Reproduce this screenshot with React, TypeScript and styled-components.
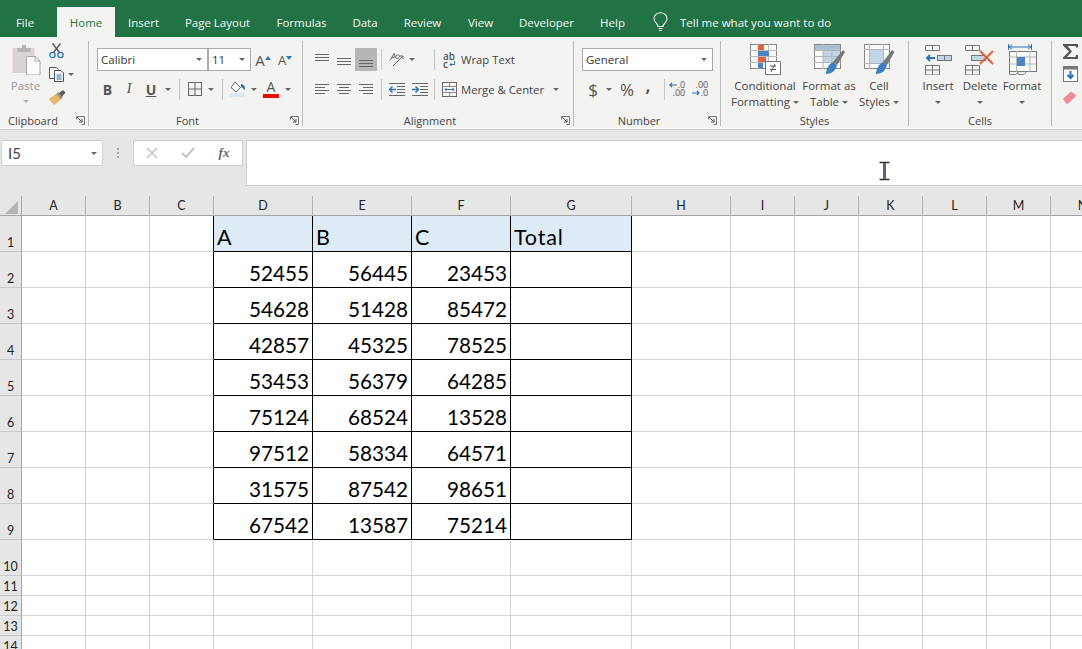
import React from "react";
import styled, { createGlobalStyle } from "styled-components";

const UI_FONT = `"Open Sans", "Noto Sans", sans-serif`;
const SHEET_FONT = `Lato, "Open Sans", sans-serif`;

const GlobalStyle = createGlobalStyle`
  html, body { margin: 0; padding: 0; background: #fff; overflow: hidden; }
  #root { width: 1082px; height: 649px; }
`;

const Page = styled.div`
  position: relative;
  width: 1082px;
  height: 649px;
  overflow: hidden;
  font-family: ${UI_FONT};
  background: #fff;
`;

/* title tabs */
const TabBar = styled.div`
  display: flex;
  align-items: flex-end;
  height: 37px;
  background: #217346;
`;

const Tab = styled.div<{ $w: number; $active?: boolean; $pr?: number }>`
  box-sizing: border-box;
  width: ${(p) => p.$w}px;
  height: ${(p) => (p.$active ? 30 : 37)}px;
  padding-right: ${(p) => p.$pr || 0}px;
  padding-top: ${(p) => (p.$active ? 0 : 7)}px;
  display: flex;
  align-items: center;
  justify-content: center;
  font-size: 11.5px;
  color: ${(p) => (p.$active ? "#217346" : "#f4f8f5")};
  background: ${(p) => (p.$active ? "#f3f3f2" : "transparent")};
`;

const TellMe = styled.div`
  display: flex;
  align-items: center;
  gap: 12px;
  height: 30px;
  margin-left: 15px;
  font-size: 11.5px;
  color: #f4f8f5;
`;

/* ribbon */
const Ribbon = styled.div`
  box-sizing: border-box;
  display: flex;
  height: 93px;
  padding-top: 4px;
  background: #f3f3f2;
  border-bottom: 1px solid #cfcfcf;
`;

const Group = styled.div<{ $w: number; $last?: boolean }>`
  box-sizing: border-box;
  flex: none;
  position: relative;
  width: ${(p) => p.$w}px;
  height: 85px;
  display: flex;
  flex-direction: column;
  border-right: ${(p) => (p.$last ? "none" : "1px solid #b9b9b9")};
`;

const GroupBody = styled.div<{ $pl?: number; $row?: boolean; $pt?: number }>`
  box-sizing: border-box;
  height: 74px;
  display: flex;
  flex-direction: ${(p) => (p.$row ? "row" : "column")};
  gap: ${(p) => (p.$row ? 0 : 7)}px;
  padding-left: ${(p) => p.$pl ?? 8}px;
  padding-top: ${(p) => p.$pt ?? 7}px;
`;

const GroupLabel = styled.div<{ $pr?: number }>`
  height: 11px;
  padding-right: ${(p) => p.$pr || 0}px;
  line-height: 11px;
  text-align: center;
  font-size: 11px;
  color: #444;
`;

const Launcher = styled.svg`
  position: absolute;
  right: 3px;
  bottom: 1px;
`;

const ToolRow = styled.div<{ $h?: number }>`
  display: flex;
  align-items: center;
  height: ${(p) => p.$h || 22}px;
`;

const Slot = styled.div<{ $w: number; $on?: boolean }>`
  flex: none;
  width: ${(p) => p.$w}px;
  height: 100%;
  display: flex;
  align-items: center;
  justify-content: center;
  background: ${(p) => (p.$on ? "#b6b6b6" : "transparent")};
`;

const Caret = styled.span`
  flex: none;
  display: inline-block;
  width: 0;
  height: 0;
  border-left: 3px solid transparent;
  border-right: 3px solid transparent;
  border-top: 3px solid #666;
`;

const Sep = styled.div<{ $ml?: number; $mr?: number }>`
  flex: none;
  width: 1px;
  height: 21px;
  margin-left: ${(p) => p.$ml || 0}px;
  margin-right: ${(p) => p.$mr || 0}px;
  background: #c6c6c6;
`;

const Combo = styled.div<{ $w: number }>`
  box-sizing: border-box;
  flex: none;
  width: ${(p) => p.$w}px;
  height: 23px;
  padding: 0 5px 0 3px;
  display: flex;
  align-items: center;
  justify-content: space-between;
  background: #fff;
  border: 1px solid #ababab;
  font-family: ${UI_FONT};
  font-size: 11.5px;
  color: #333;
`;

const FormatLetter = styled.span<{ $serif?: boolean; $i?: boolean; $u?: boolean }>`
  font-family: ${(p) => (p.$serif ? `"Liberation Serif", serif` : UI_FONT)};
  font-size: 14px;
  font-weight: ${(p) => (p.$i ? 400 : 700)};
  font-style: ${(p) => (p.$i ? "italic" : "normal")};
  text-decoration: ${(p) => (p.$u ? "underline" : "none")};
  color: #555;
`;

const NumSymbol = styled.span<{ $size?: number; $raise?: number; $bold?: boolean }>`
  padding-bottom: ${(p) => p.$raise || 0}px;
  font-size: ${(p) => p.$size || 17}px;
  font-weight: ${(p) => (p.$bold ? 700 : 400)};
  color: #555;
`;

const TextTool = styled.div<{ $gap?: number }>`
  display: flex;
  align-items: center;
  gap: ${(p) => p.$gap ?? 4}px;
  font-size: 11.3px;
  color: #444;
  white-space: nowrap;
`;

/* small glyph buttons that hold real letters */
const GrowGlyph = styled.span<{ $size: number }>`
  display: flex;
  align-items: flex-end;
  height: 20px;
  font-size: ${(p) => p.$size}px;
  line-height: 20px;
  color: #555;
`;

const TinyArrow = styled.svg`
  margin-bottom: 10px;
`;

const ColorGlyph = styled.span`
  display: flex;
  flex-direction: column;
  align-items: center;
  width: 16px;
  font-size: 14px;
  line-height: 14px;
  color: #555;
`;

const ColorBar = styled.span`
  width: 16px;
  height: 4px;
  background: #f00;
`;

const StackGlyph = styled.span`
  display: flex;
  flex-direction: column;
  align-items: flex-end;
  font-size: 9px;
  line-height: 8px;
  color: #555;
`;

const StackLine = styled.span`
  display: flex;
  align-items: center;
  gap: 1px;
  height: 8px;
`;

const WrapGlyph = styled.span`
  display: flex;
  flex-direction: column;
  width: 13px;
  font-size: 10px;
  font-weight: 600;
  line-height: 8px;
  color: #555;
`;

const PasteColumn = styled.div`
  flex: none;
  width: 35px;
  display: flex;
  flex-direction: column;
  align-items: center;
  font-size: 11.5px;
  color: #9c9c9c;
`;

const PasteText = styled.div`
  margin-top: 3px;
  line-height: 16px;
`;

const PasteCaret = styled(Caret)`
  margin-top: 6px;
  border-top-color: #b5b5b5;
`;

const ClipTools = styled.div`
  display: flex;
  flex-direction: column;
  gap: 7px;
  margin: -1px 0 0 6px;
`;

const ClipTool = styled.div`
  display: flex;
  align-items: center;
  gap: 3px;
  height: 16px;
`;

const BigButton = styled.div<{ $w: number }>`
  flex: none;
  width: ${(p) => p.$w}px;
  display: flex;
  flex-direction: column;
  align-items: center;
  font-size: 11.5px;
  line-height: 16px;
  color: #444;
  white-space: nowrap;
`;

const BigIcon = styled.div`
  height: 31px;
  margin-bottom: 3px;
`;

const LabelLine = styled.div`
  display: flex;
  align-items: center;
  gap: 3px;
  height: 16px;
`;

const EditingTools = styled.div`
  display: flex;
  flex-direction: column;
  gap: 7px;
  margin-left: 11px;
`;

/* formula bar */
const FormulaBar = styled.div`
  box-sizing: border-box;
  display: flex;
  align-items: flex-start;
  height: 66px;
  padding: 10px 0 0 1px;
  background: #e6e6e6;
`;

const NameBox = styled.div`
  box-sizing: border-box;
  width: 102px;
  height: 26px;
  padding: 0 5px 0 6px;
  display: flex;
  align-items: center;
  justify-content: space-between;
  background: #fff;
  border: 1px solid #cfcfcf;
  font-family: ${SHEET_FONT};
  font-size: 15px;
  color: #444;
`;

const Dots = styled.div`
  width: 30px;
  height: 26px;
  display: flex;
  flex-direction: column;
  align-items: center;
  justify-content: center;
  gap: 2px;
  span {
    width: 2px;
    height: 2px;
    background: #a8a8a8;
  }
`;

const FxBox = styled.div`
  box-sizing: border-box;
  width: 110px;
  height: 26px;
  display: flex;
  align-items: center;
  background: #fff;
  border: 1px solid #cfcfcf;
`;

const FxSlot = styled.div`
  flex: 1;
  display: flex;
  align-items: center;
  justify-content: center;
`;

const FxText = styled.span`
  font-family: "Liberation Serif", serif;
  font-style: italic;
  font-weight: 700;
  font-size: 13px;
  color: #666;
`;

const FormulaInput = styled.div`
  box-sizing: border-box;
  flex: 1;
  height: 46px;
  margin-left: 3px;
  background: #fff;
  border: 1px solid #cfcfcf;
  border-right: none;
`;

const IBeam = styled.svg`
  position: absolute;
  left: 878px;
  top: 161px;
`;

/* sheet */
const Sheet = styled.div`
  display: grid;
  grid-template-columns: 22px 64px 64px 64px 99px 99px 99px 121px 99px 64px 64px 64px 64px 64px 64px;
  grid-template-rows: 20px repeat(10, 36px) repeat(4, 20px);
`;

const Corner = styled.div`
  box-sizing: border-box;
  display: flex;
  align-items: flex-end;
  justify-content: flex-end;
  padding: 0 3px 1px 0;
  background: #e6e6e6;
  border-bottom: 1px solid #a5a5a5;
  border-right: 1px solid #a5a5a5;
`;

const ColHead = styled.div`
  box-sizing: border-box;
  display: flex;
  align-items: center;
  justify-content: center;
  background: #e6e6e6;
  border-bottom: 1px solid #a5a5a5;
  border-right: 1px solid #b4b4b4;
  font-family: ${SHEET_FONT};
  font-size: 12.5px;
  color: #222;
`;

const RowHead = styled.div`
  box-sizing: border-box;
  display: flex;
  align-items: flex-end;
  justify-content: center;
  background: #e6e6e6;
  border-bottom: 1px solid #c9c9c9;
  border-right: 1px solid #a5a5a5;
  font-family: ${SHEET_FONT};
  font-size: 12.5px;
  line-height: 16px;
  color: #222;
`;

const Cell = styled.div<{ $boxed?: boolean; $edge?: boolean; $head?: boolean; $num?: boolean }>`
  box-sizing: border-box;
  display: flex;
  align-items: flex-end;
  justify-content: ${(p) => (p.$num ? "flex-end" : "flex-start")};
  padding: 0 3px;
  background: ${(p) => (p.$head ? "#ddebf7" : "#fff")};
  border-right: 1px solid ${(p) => (p.$boxed || p.$edge ? "#000" : "#d4d4d4")};
  border-bottom: 1px solid ${(p) => (p.$boxed ? "#000" : "#d4d4d4")};
  font-family: ${SHEET_FONT};
  font-size: ${(p) => (p.$head ? 21.5 : 20.7)}px;
  letter-spacing: ${(p) => (p.$head ? 0.8 : 0)}px;
  line-height: 27px;
  color: #000;
`;

const caretSlot = (w: number) => (
  <Slot $w={w}>
    <Caret />
  </Slot>
);

const LauncherIcon = () => (
  <Launcher width="9" height="9" viewBox="0 0 9 9" fill="none" stroke="#777">
    <path d="M0.5 3.5V0.5H8.5V8.5H5.5" />
    <path d="M1 1L6 6M6 3V6H3" stroke="#555" />
  </Launcher>
);

const Lines = ({ rows, w = 14, h = 14, color = "#666" }: { rows: number[][]; w?: number; h?: number; color?: string }) => (
  <svg width={w} height={h} viewBox={`0 0 ${w} ${h}`} stroke={color} fill="none">
    {rows.map((r, i) => (
      <path key={i} d={`M${r[0]} ${r[2] + 0.5}H${r[1]}`} />
    ))}
  </svg>
);

const alignRows = {
  top: [[0, 14, 1], [0, 14, 4], [0, 14, 7]],
  mid: [[0, 14, 5], [0, 14, 8], [0, 14, 11]],
  bot: [[0, 14, 7], [0, 14, 10], [0, 14, 13]],
  left: [[0, 14, 2], [0, 10, 5], [0, 14, 8], [0, 10, 11]],
  center: [[0, 14, 2], [2, 12, 5], [0, 14, 8], [2, 12, 11]],
  right: [[0, 14, 2], [4, 14, 5], [0, 14, 8], [4, 14, 11]],
};

const PasteIcon = () => (
  <svg width="31" height="31" viewBox="0 0 31 31">
    <rect x="2.5" y="4" width="22" height="25" fill="#dcd3d5" />
    <path d="M7.5 8V4H12V1H16V4H20.5V8Z" fill="#b4b4b4" />
    <path d="M16.5 12.5H25L30 17V31H16.5Z" fill="#fbfbfb" stroke="#a9a9a9" />
    <path d="M25 12.5V17H30" fill="none" stroke="#a9a9a9" />
  </svg>
);

const ScissorsIcon = () => (
  <svg width="15" height="16" viewBox="0 0 15 16" fill="none">
    <path d="M4.5 9.5L11.5 0.5M10.5 9.5L3.5 0.5" stroke="#555" strokeWidth="1.3" />
    <circle cx="3.5" cy="12" r="2.6" stroke="#2e75b6" strokeWidth="1.3" />
    <circle cx="11.5" cy="12" r="2.6" stroke="#2e75b6" strokeWidth="1.3" />
  </svg>
);

const CopyIcon = () => (
  <svg width="16" height="15" viewBox="0 0 16 15" fill="#f8f8f8" stroke="#555">
    <path d="M0.5 0.5H7.5L9.5 2.5V11.5H0.5Z" />
    <path d="M5.5 3.5H12L14.5 6V14.5H5.5Z" />
    <path d="M7.5 8H12.5M7.5 10H12.5M7.5 12H12.5" stroke="#2e75b6" />
  </svg>
);

const BrushIcon = () => (
  <svg width="17" height="15" viewBox="0 0 17 15">
    <path d="M0 9L7 4L12 9.5L5 15Z" fill="#e9b765" />
    <path d="M7 4L9.5 2L14 7L12 9.5Z" fill="#9a8f80" />
    <path d="M10 3L14 0L16.5 2.5L13 6.5Z" fill="#5a5a5a" />
  </svg>
);

const FontSizeGlyph = ({ up }: { up?: boolean }) => (
  <GrowGlyph $size={up ? 15 : 13}>
    A
    <TinyArrow width="6" height="4" viewBox="0 0 6 4">
      <path d={up ? "M0 4L3 0L6 4Z" : "M0 0H6L3 4Z"} fill="#2e75b6" />
    </TinyArrow>
  </GrowGlyph>
);

const BordersIcon = () => (
  <svg width="14" height="14" viewBox="0 0 14 14" fill="none" stroke="#666">
    <rect x="0.5" y="0.5" width="13" height="13" />
    <path d="M7 0V14M0 7H14" />
  </svg>
);

const FillIcon = () => (
  <svg width="16" height="16" viewBox="0 0 16 16">
    <rect x="0" y="12" width="14" height="4" fill="#d9e8f5" />
    <path d="M5 1L10.5 6.5L6 11L1 6.5Z" fill="#fff" stroke="#666" />
    <path d="M11 3C14 3.5 15.5 6 15 9L13 7.5L11 6Z" fill="#2e75b6" />
  </svg>
);

const OrientationIcon = () => (
  <svg width="16" height="15" viewBox="0 0 16 15" fill="none" stroke="#666">
    <path d="M1 8.5L5 1.5L7.5 7M2.5 6L6.5 4.5" />
    <path d="M7 3.5C9 2.5 10.5 3 10.5 4.5C10.5 6 8.5 7 7.5 6" strokeWidth="0.9" />
    <path d="M4 14L14 4M14 4H10.5M14 4V7.5" />
  </svg>
);

const WrapIcon = () => (
  <WrapGlyph>
    <StackLine>ab</StackLine>
    <StackLine>
      c
      <svg width="6" height="6" viewBox="0 0 6 6" fill="none" stroke="#2e75b6">
        <path d="M5.5 0V3.5H1M2.5 2L1 3.5L2.5 5" />
      </svg>
    </StackLine>
  </WrapGlyph>
);

const MergeIcon = () => (
  <svg width="15" height="15" viewBox="0 0 15 15" fill="none">
    <rect x="0.5" y="0.5" width="14" height="14" fill="#fafafa" stroke="#666" />
    <path d="M0 4.5H15M0 10.5H15M7.5 0V4M7.5 11V15" stroke="#888" />
    <path d="M3 7.5H12M4.5 6L3 7.5L4.5 9M10.5 6L12 7.5L10.5 9" stroke="#2e75b6" />
  </svg>
);

const IndentIcon = ({ flip }: { flip?: boolean }) => (
  <svg width="16" height="14" viewBox="0 0 16 14" fill="none">
    <path d="M0 1.5H16M8 4.5H16M8 7.5H16M8 10.5H16M0 13.5H16" stroke="#666" />
    <path d={flip ? "M0 7.5H6M3.5 4.5L6.5 7.5L3.5 10.5" : "M7 7.5H1M3.5 4.5L0.5 7.5L3.5 10.5"} stroke="#2e75b6" strokeWidth="1.5" />
  </svg>
);

const DecArrow = ({ right }: { right?: boolean }) => (
  <svg width="8" height="6" viewBox="0 0 8 6" fill="none" stroke="#2e75b6" strokeWidth="1.2">
    <path d={right ? "M0 3H7M5 1L7 3L5 5" : "M8 3H1M3 1L1 3L3 5"} />
  </svg>
);

const ConditionalIcon = () => (
  <svg width="31" height="31" viewBox="0 0 31 31" fill="none">
    <rect x="0.5" y="0.5" width="26" height="24" fill="#fafafa" stroke="#888" />
    <path d="M8.5 0V25M18.5 0V25M0 6.5H27M0 12.5H27M0 18.5H27" stroke="#b9b9b9" />
    <rect x="8" y="1" width="6" height="5" fill="#e0633d" />
    <rect x="8" y="7" width="11" height="5" fill="#4a86c5" />
    <rect x="8" y="13" width="8" height="5" fill="#e0633d" />
    <rect x="8" y="19" width="5" height="5" fill="#4a86c5" />
    <rect x="15.5" y="17.5" width="15" height="13" fill="#fff" stroke="#777" />
    <path d="M20 22H26M20 25.5H26M25 20L21 28" stroke="#555" />
  </svg>
);

const TableStyleIcon = () => (
  <svg width="31" height="31" viewBox="0 0 31 31" fill="none">
    <rect x="0.5" y="0.5" width="26" height="24" fill="#fafafa" stroke="#888" />
    <rect x="1" y="1" width="25" height="5" fill="#aebfd4" />
    <rect x="9" y="7" width="17" height="11" fill="#c2d4e8" />
    <path d="M9 0V25M18 0V25M0 6.5H27M0 12.5H27M0 18.5H27" stroke="#b5b5b5" />
    <path d="M19 18L29 6L31 8L23 21Z" fill="#777" />
    <path d="M12 30C12 25 15 20 19 18L23 21C22 26 18 30 12 30Z" fill="#3f7fc0" />
  </svg>
);

const CellStyleIcon = () => (
  <svg width="31" height="31" viewBox="0 0 31 31" fill="none">
    <rect x="0.5" y="0.5" width="25" height="24" fill="#fafafa" stroke="#888" />
    <path d="M5.5 0V25M19.5 0V25M0 5.5H26M0 19.5H26" stroke="#b5b5b5" />
    <rect x="6" y="6" width="13" height="13" fill="#c2d4e8" />
    <path d="M19 18L28 6L30.5 8L23 21Z" fill="#777" />
    <path d="M12 30C12 25 15 20 19 18L23 21C22 26 18 30 12 30Z" fill="#3f7fc0" />
  </svg>
);

const InsertCellsIcon = () => (
  <svg width="27" height="31" viewBox="0 0 27 31" fill="none" stroke="#777">
    <path d="M0.5 1.5H14.5V6.5H0.5ZM7.5 1.5V6.5" />
    <rect x="12.5" y="11.5" width="14" height="5" fill="#c2d4e8" />
    <path d="M19.5 11V17" />
    <path d="M10 14H2M5 11L2 14L5 17" stroke="#2e75b6" strokeWidth="2" />
    <path d="M0.5 21.5H14.5V31H0.5ZM7.5 21.5V31M0.5 26H14.5" />
  </svg>
);

const DeleteCellsIcon = () => (
  <svg width="30" height="31" viewBox="0 0 30 31" fill="none" stroke="#777">
    <path d="M0.5 1.5H14.5V6.5H0.5ZM7.5 1.5V6.5" />
    <rect x="6.5" y="11.5" width="14" height="5" fill="#c2d4e8" />
    <path d="M0.5 21.5H14.5V31H0.5ZM7.5 21.5V31M0.5 26H14.5" />
    <path d="M15 7L28 20M28 7L15 20" stroke="#e0633d" strokeWidth="2" />
  </svg>
);

const FormatCellsIcon = () => (
  <svg width="29" height="31" viewBox="0 0 29 31" fill="none">
    <path d="M0.5 0V6M23.5 0V6M1 3H23M1 3L4 0.8M1 3L4 5.2M23 3L20 0.8M23 3L20 5.2" stroke="#2e75b6" />
    <rect x="1.5" y="7.5" width="27" height="20" fill="#fafafa" stroke="#777" />
    <path d="M8.5 7V28M22 7V28M1 13H28M1 20H28" stroke="#b5b5b5" />
    <rect x="9" y="13" width="8" height="9" fill="#4a86c5" />
    <path d="M1.5 28V30.5H8L10 28M10 28V30.5H16L18 28" stroke="#888" />
  </svg>
);

const SigmaIcon = () => (
  <svg width="15" height="15" viewBox="0 0 15 15">
    <path d="M0 0H15V3.5H13L12.5 2H4.5L9 7.5L4 13H12.5L13 11H15V15H0V13.5L6 7.5L0 1.5Z" fill="#555" />
  </svg>
);

const FillDownIcon = () => (
  <svg width="15" height="16" viewBox="0 0 15 16" fill="none">
    <rect x="0.5" y="0.5" width="14" height="15" fill="#fafafa" stroke="#777" />
    <rect x="0" y="0" width="15" height="3.5" fill="#777" />
    <path d="M7.5 5V12M4.5 9L7.5 12L10.5 9" stroke="#2e75b6" strokeWidth="2" />
  </svg>
);

const EraserIcon = () => (
  <svg width="14" height="15" viewBox="0 -1 14 15">
    <path d="M0 9L8 1.5L13.5 5.5L5.5 13.5H3Z" fill="#ee8e98" />
  </svg>
);

const BulbIcon = () => (
  <svg width="15" height="20" viewBox="0 0 15 20" fill="none" stroke="#f4f8f5" strokeWidth="1.1">
    <path d="M5 14.5C5 11.5 1 10.5 1 6.5C1 3 4 0.8 7.5 0.8C11 0.8 14 3 14 6.5C14 10.5 10 11.5 10 14.5Z" />
    <path d="M5.5 16.5H9.5M6 18.5H9" />
  </svg>
);

const tabs: { label: string; w: number; active?: boolean; pr?: number }[] = [
  { label: "File", w: 57, pr: 7 },
  { label: "Home", w: 58, active: true },
  { label: "Insert", w: 57 },
  { label: "Page Layout", w: 91 },
  { label: "Formulas", w: 77 },
  { label: "Data", w: 50 },
  { label: "Review", w: 65 },
  { label: "View", w: 51 },
  { label: "Developer", w: 81 },
  { label: "Help", w: 51 },
];

const columns = ["A", "B", "C", "D", "E", "F", "G", "H", "I", "J", "K", "L", "M", "N"];

const data = [
  [52455, 56445, 23453],
  [54628, 51428, 85472],
  [42857, 45325, 78525],
  [53453, 56379, 64285],
  [75124, 68524, 13528],
  [97512, 58334, 64571],
  [31575, 87542, 98651],
  [67542, 13587, 75214],
];

const headers = ["A", "B", "C", "Total"];

const renderRow = (row: number) => {
  const cells = columns.map((col, c) => {
    const inTable = row <= 9 && c >= 3 && c <= 6;
    let content: React.ReactNode = null;
    if (inTable && row === 1) content = headers[c - 3];
    if (inTable && row > 1 && c < 6) content = data[row - 2][c - 3];
    return (
      <Cell
        key={col}
        $boxed={inTable}
        $edge={row <= 9 && c === 2}
        $head={inTable && row === 1}
        $num={inTable && row > 1}
      >
        {content}
      </Cell>
    );
  });
  return (
    <React.Fragment key={row}>
      <RowHead>{row}</RowHead>
      {cells}
    </React.Fragment>
  );
};

const App: React.FC = () => (
  <Page>
    <GlobalStyle />
    <TabBar>
      {tabs.map((t) => (
        <Tab key={t.label} $w={t.w} $active={t.active} $pr={t.pr}>
          {t.label}
        </Tab>
      ))}
      <TellMe>
        <BulbIcon />
        Tell me what you want to do
      </TellMe>
    </TabBar>

    <Ribbon>
      <Group $w={89}>
        <GroupBody $row $pt={3}>
          <PasteColumn>
            <PasteIcon />
            <PasteText>Paste</PasteText>
            <PasteCaret />
          </PasteColumn>
          <ClipTools>
            <ClipTool><ScissorsIcon /></ClipTool>
            <ClipTool><CopyIcon /><Caret /></ClipTool>
            <ClipTool><BrushIcon /></ClipTool>
          </ClipTools>
        </GroupBody>
        <GroupLabel $pr={22}>Clipboard</GroupLabel>
        <LauncherIcon />
      </Group>

      <Group $w={214}>
        <GroupBody>
          <ToolRow $h={23}>
            <Combo $w={111}>Calibri<Caret /></Combo>
            <Combo $w={43}>11<Caret /></Combo>
            <Slot $w={24}><FontSizeGlyph up /></Slot>
            <Slot $w={20}><FontSizeGlyph /></Slot>
          </ToolRow>
          <ToolRow>
            <Slot $w={21}><FormatLetter>B</FormatLetter></Slot>
            <Slot $w={22}><FormatLetter $serif $i>I</FormatLetter></Slot>
            <Slot $w={22}><FormatLetter $u>U</FormatLetter></Slot>
            {caretSlot(12)}
            <Sep $ml={5} $mr={5} />
            <Slot $w={20}><BordersIcon /></Slot>
            {caretSlot(12)}
            <Sep $ml={5} $mr={5} />
            <Slot $w={20}><FillIcon /></Slot>
            {caretSlot(12)}
            <Slot $w={22}>
              <ColorGlyph>A<ColorBar /></ColorGlyph>
            </Slot>
            {caretSlot(12)}
          </ToolRow>
        </GroupBody>
        <GroupLabel $pr={16}>Font</GroupLabel>
        <LauncherIcon />
      </Group>

      <Group $w={271}>
        <GroupBody>
          <ToolRow $h={23}>
            <Slot $w={22}><Lines rows={alignRows.top} /></Slot>
            <Slot $w={22}><Lines rows={alignRows.mid} /></Slot>
            <Slot $w={22} $on><Lines rows={alignRows.bot} /></Slot>
            <Sep $ml={4} $mr={3} />
            <Slot $w={24}><OrientationIcon /></Slot>
            {caretSlot(6)}
            <Sep $ml={19} $mr={8} />
            <TextTool $gap={5}><WrapIcon />Wrap Text</TextTool>
          </ToolRow>
          <ToolRow>
            <Slot $w={22}><Lines rows={alignRows.left} /></Slot>
            <Slot $w={22}><Lines rows={alignRows.center} /></Slot>
            <Slot $w={22}><Lines rows={alignRows.right} /></Slot>
            <Sep $ml={4} $mr={3} />
            <Slot $w={24}><IndentIcon /></Slot>
            <Slot $w={22}><IndentIcon flip /></Slot>
            <Sep $ml={3} $mr={7} />
            <TextTool><MergeIcon />Merge &amp; Center</TextTool>
            <Slot $w={24}><Caret /></Slot>
          </ToolRow>
        </GroupBody>
        <GroupLabel $pr={16}>Alignment</GroupLabel>
        <LauncherIcon />
      </Group>

      <Group $w={147}>
        <GroupBody>
          <ToolRow $h={23}>
            <Combo $w={131}>General<Caret /></Combo>
          </ToolRow>
          <ToolRow>
            <Slot $w={22}><NumSymbol>$</NumSymbol></Slot>
            {caretSlot(10)}
            <Slot $w={26}><NumSymbol>%</NumSymbol></Slot>
            <Slot $w={16}><NumSymbol $bold $raise={7}>,</NumSymbol></Slot>
            <Sep $ml={8} />
            <Slot $w={24}>
              <StackGlyph>
                <StackLine><DecArrow />.0</StackLine>
                <StackLine>.00</StackLine>
              </StackGlyph>
            </Slot>
            <Slot $w={22}>
              <StackGlyph>
                <StackLine>.00</StackLine>
                <StackLine><DecArrow right />.0</StackLine>
              </StackGlyph>
            </Slot>
          </ToolRow>
        </GroupBody>
        <GroupLabel $pr={16}>Number</GroupLabel>
        <LauncherIcon />
      </Group>

      <Group $w={188}>
        <GroupBody $row $pl={9} $pt={3}>
          <BigButton $w={70}>
            <BigIcon><ConditionalIcon /></BigIcon>
            <LabelLine>Conditional</LabelLine>
            <LabelLine>Formatting<Caret /></LabelLine>
          </BigButton>
          <BigButton $w={58}>
            <BigIcon><TableStyleIcon /></BigIcon>
            <LabelLine>Format as</LabelLine>
            <LabelLine>Table<Caret /></LabelLine>
          </BigButton>
          <BigButton $w={42}>
            <BigIcon><CellStyleIcon /></BigIcon>
            <LabelLine>Cell</LabelLine>
            <LabelLine>Styles<Caret /></LabelLine>
          </BigButton>
        </GroupBody>
        <GroupLabel>Styles</GroupLabel>
      </Group>

      <Group $w={143}>
        <GroupBody $row $pt={3}>
          <BigButton $w={42}>
            <BigIcon><InsertCellsIcon /></BigIcon>
            <LabelLine>Insert</LabelLine>
            <LabelLine><Caret /></LabelLine>
          </BigButton>
          <BigButton $w={42}>
            <BigIcon><DeleteCellsIcon /></BigIcon>
            <LabelLine>Delete</LabelLine>
            <LabelLine><Caret /></LabelLine>
          </BigButton>
          <BigButton $w={42}>
            <BigIcon><FormatCellsIcon /></BigIcon>
            <LabelLine>Format</LabelLine>
            <LabelLine><Caret /></LabelLine>
          </BigButton>
        </GroupBody>
        <GroupLabel>Cells</GroupLabel>
      </Group>

      <Group $w={30} $last>
        <GroupBody $row $pl={0} $pt={3}>
          <EditingTools>
            <SigmaIcon />
            <FillDownIcon />
            <EraserIcon />
          </EditingTools>
        </GroupBody>
      </Group>
    </Ribbon>

    <FormulaBar>
      <NameBox>
        I5
        <Caret />
      </NameBox>
      <Dots><span /><span /><span /></Dots>
      <FxBox>
        <FxSlot>
          <svg width="12" height="12" viewBox="0 0 12 12" fill="none" stroke="#c4c4c4" strokeWidth="1.6">
            <path d="M1 1L11 11M11 1L1 11" />
          </svg>
        </FxSlot>
        <FxSlot>
          <svg width="14" height="12" viewBox="0 0 14 12" fill="none" stroke="#c4c4c4" strokeWidth="2">
            <path d="M1 6L5 10L13 1" />
          </svg>
        </FxSlot>
        <FxSlot><FxText>fx</FxText></FxSlot>
      </FxBox>
      <FormulaInput />
    </FormulaBar>

    <Sheet>
      <Corner>
        <svg width="13" height="13" viewBox="0 0 13 13">
          <path d="M13 0V13H0Z" fill="#b4b4b4" />
        </svg>
      </Corner>
      {columns.map((c) => (
        <ColHead key={c}>{c}</ColHead>
      ))}
      {Array.from({ length: 14 }, (_, i) => renderRow(i + 1))}
    </Sheet>

    <IBeam width="13" height="20" viewBox="0 0 13 20" fill="none">
      <path d="M1 1.5H12M1 18.5H12M6.5 2V18" stroke="#fff" strokeWidth="4" />
      <path d="M1.5 1.5H11.5M1.5 18.5H11.5" stroke="#333" strokeWidth="1.4" />
      <path d="M6.5 2V18" stroke="#6d5a7a" strokeWidth="3" />
    </IBeam>
  </Page>
);

export default App;
